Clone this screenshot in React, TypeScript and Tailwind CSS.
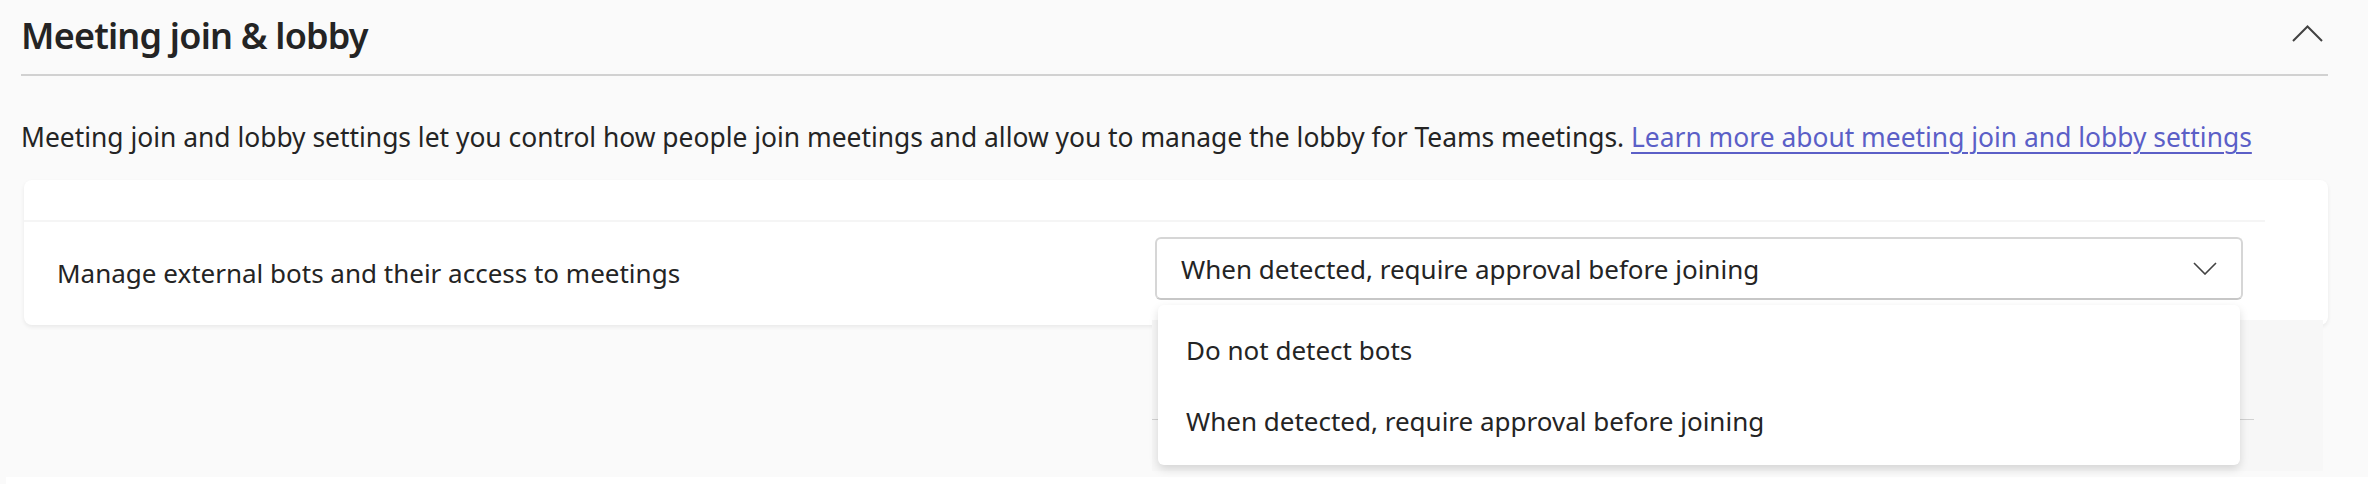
import React from 'react';

const font = { fontFamily: '"Noto Sans", "Open Sans", Arial, sans-serif' };

function ChevronUp() {
  return (
    <svg width="31" height="17" viewBox="0 0 31 17" fill="none" className="block">
      <path d="M1 16 L15.5 1.5 L30 16" stroke="#424242" strokeWidth="2" />
    </svg>
  );
}

function ChevronDown() {
  return (
    <svg width="24" height="13" viewBox="0 0 24 13" fill="none" className="block">
      <path d="M1 1 L12 12 L23 1" stroke="#424242" strokeWidth="1.6" />
    </svg>
  );
}

export default function App() {
  return (
    <div className="w-[2368px] h-[484px] overflow-hidden bg-[#fafafa] text-[#242424]" style={font}>
      {/* section header */}
      <div className="ml-[21px] mr-[40px] h-[76px] flex items-start justify-between border-b-2 border-[#d1d1d1]">
        <h2 className="pt-[12px] text-[36px] leading-[48px] font-semibold tracking-[-0.8px]">Meeting join &amp; lobby</h2>
        <div className="pt-[25px] pr-[5px]">
          <ChevronUp />
        </div>
      </div>

      <p className="ml-[21px] mt-[43px] text-[26.4px] leading-[36px]">
        Meeting join and lobby settings let you control how people join meetings and allow you to manage the lobby for Teams meetings.{' '}
        <a href="#" className="text-[#5b5fc7] underline underline-offset-[5px] decoration-[1.5px]">Learn more about meeting join and lobby settings</a>
      </p>

      {/* settings card */}
      <div className="ml-[24px] mr-[40px] mt-[25px] h-[145px] bg-white rounded-[8px] shadow-[0_2px_4px_rgba(0,0,0,0.07)]">
        <div className="h-[42px] mr-[63px] border-b-2 border-[#f5f5f5]" />
        <div className="flex items-start pt-[15px]">
          <div className="flex-1 pl-[33px] pt-[18px] text-[26px] leading-[36px]">
            Manage external bots and their access to meetings
          </div>
          <div className="relative w-[1088px] mr-[85px]">
            <div className="h-[63px] flex items-center justify-between pl-[24px] pr-[24px] bg-white rounded-[6px] border-2 border-[#d6d6d6] border-b-[#c7c7c7]">
              <span className="text-[26px] leading-[36px]">When detected, require approval before joining</span>
              <ChevronDown />
            </div>

            {/* section underneath the open list */}
            <div className="absolute left-[-3px] top-[83px] w-[1171px] h-[151px] bg-[#f7f7f7]">
              <div className="mt-[99px] w-[1102px] border-b border-[#d1d1d1]" />
            </div>

            {/* open list */}
            <div className="absolute left-[3px] top-[68px] w-[1082px] py-[9px] bg-white rounded-[6px] shadow-[0_4px_10px_rgba(0,0,0,0.14)]">
              <div className="h-[71px] flex items-center pl-[28px] text-[26px] leading-[36px]">Do not detect bots</div>
              <div className="h-[71px] flex items-center pl-[28px] text-[26px] leading-[36px]">When detected, require approval before joining</div>
            </div>
          </div>
        </div>
      </div>

      <div className="ml-[6px] mt-[152px] h-[20px] bg-white" />
    </div>
  );
}
